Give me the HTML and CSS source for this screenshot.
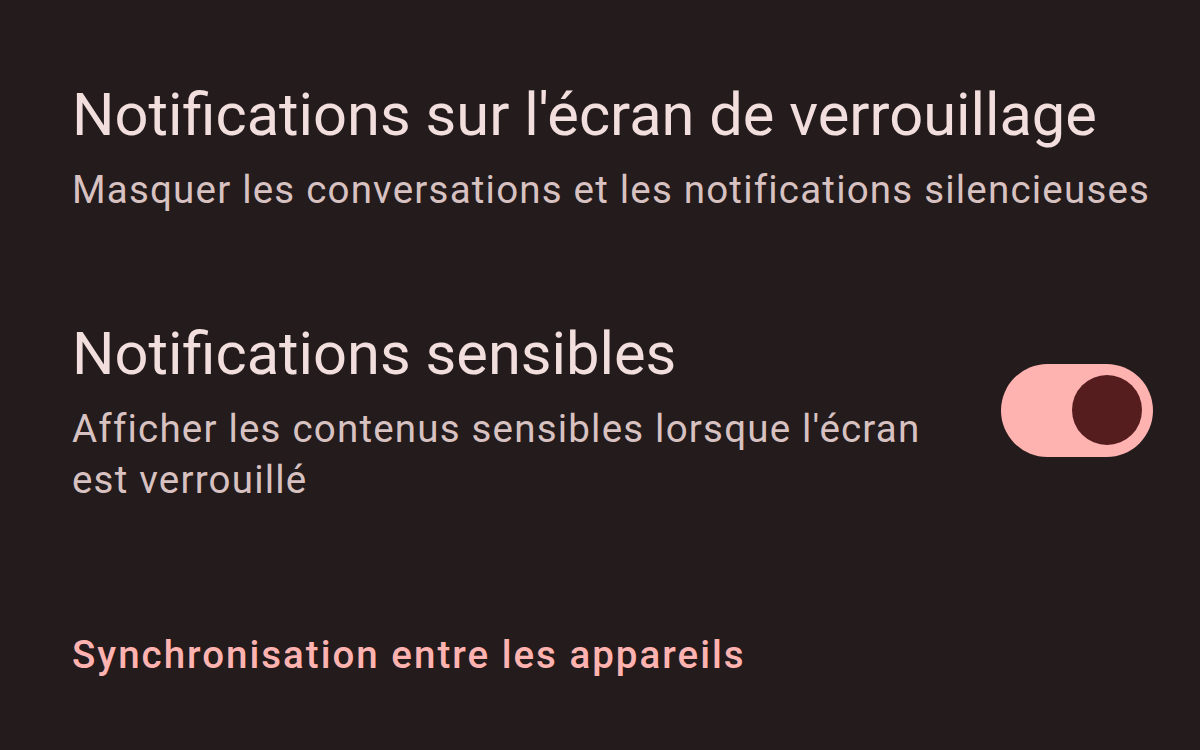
FILE: index.html
```html
<!DOCTYPE html>
<html lang="fr">
<head>
<meta charset="utf-8">
<link rel="stylesheet" href="styles.css">
</head>
<body>
<main class="screen">
  <section class="item">
    <div class="text">
      <h2 class="title">Notifications sur l'écran de verrouillage</h2>
      <p class="summary">Masquer les conversations et les notifications silencieuses</p>
    </div>
  </section>
  <section class="item item-switch">
    <div class="text narrow">
      <h2 class="title">Notifications sensibles</h2>
      <p class="summary">Afficher les contenus sensibles lorsque l'écran est verrouillé</p>
    </div>
    <div class="switch" role="switch" aria-checked="true"><span class="thumb"></span></div>
  </section>
  <h3 class="category">Synchronisation entre les appareils</h3>
</main>
</body>
</html>
```
FILE: styles.css
```css
html, body {
  margin: 0;
  padding: 0;
  background: #231b1c;
  width: 1200px;
  height: 750px;
  overflow: hidden;
}
.screen {
  font-family: Roboto, "Open Sans", sans-serif;
  padding: 80px 0 0 72px;
}
.item {
  display: flex;
  align-items: center;
}
.text {
  flex: 1;
}
.title {
  margin: 0;
  font-weight: 400;
  font-size: 59.6px;
  line-height: 70px;
  color: #f1dedd;
}
.summary {
  margin: 14px 0 0;
  font-size: 38.5px;
  letter-spacing: 1.2px;
  line-height: 51px;
  color: #d8c2c1;
}
.item-switch {
  margin-top: 104px;
  padding-right: 47px;
}
.narrow {
  max-width: 880px;
}
.switch {
  width: 152px;
  height: 93px;
  border-radius: 47px;
  background: #ffb3b0;
  display: flex;
  align-items: center;
  justify-content: flex-end;
  padding-right: 11px;
  box-sizing: border-box;
  margin: 0 0 4px auto;
}
.thumb {
  width: 70px;
  height: 70px;
  border-radius: 50%;
  background: #561d1f;
}
.category {
  margin: 124px 0 0;
  font-size: 38.5px;
  letter-spacing: 2px;
  line-height: 51px;
  font-weight: 500;
  color: #ffb3b1;
}
```
